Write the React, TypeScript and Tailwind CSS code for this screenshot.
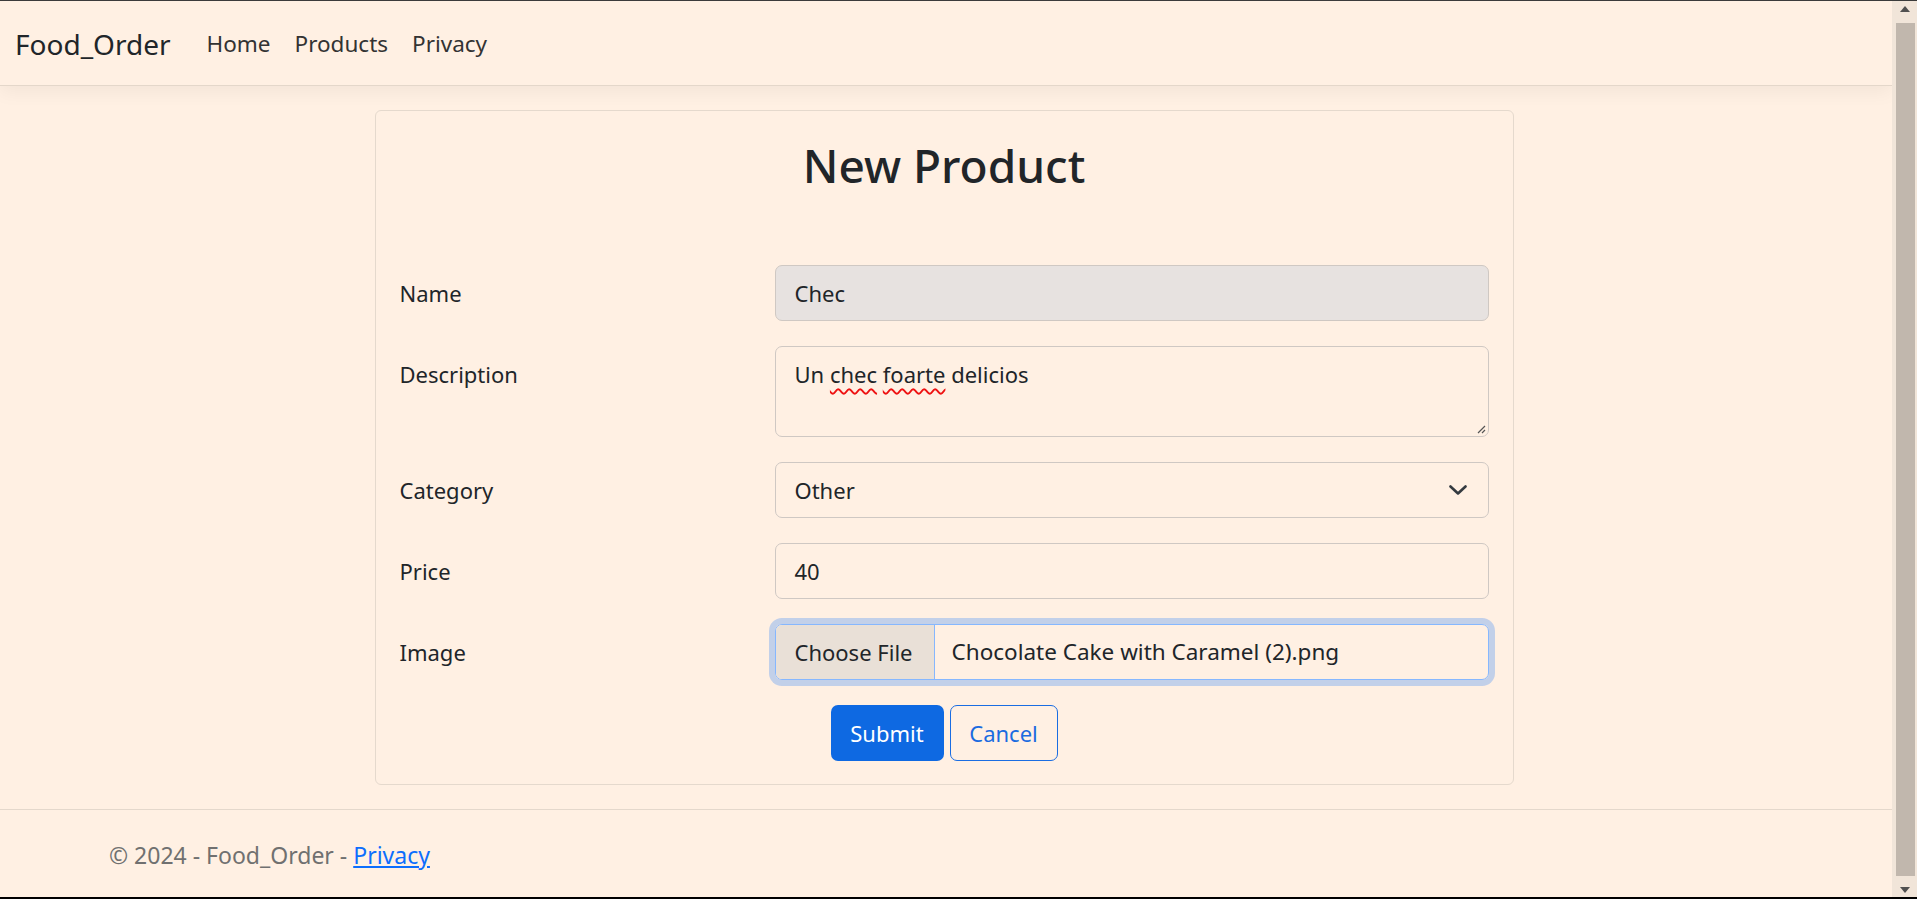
import { ReactNode } from "react";

function Row({ label, children }: { label: string; children: ReactNode }) {
  return (
    <div className="grid grid-cols-[375px_714px]">
      <label className="pt-[10px] leading-[36px]">{label}</label>
      {children}
    </div>
  );
}

function Scrollbar() {
  return (
    <div className="flex w-[25px] shrink-0 flex-col items-center bg-[#f1e5d9] pl-[1px]">
      <svg width="10" height="6" viewBox="0 0 10 6" className="mt-[5px]">
        <path d="M0 6 L5 0 L10 6 Z" fill="#505050" />
      </svg>
      <div className="mt-[11px] mb-[11px] w-[19px] flex-1 bg-[#c1b7ad]" />
      <svg width="10" height="6" viewBox="0 0 10 6" className="mb-[4px]">
        <path d="M0 0 L10 0 L5 6 Z" fill="#505050" />
      </svg>
    </div>
  );
}

export default function App() {
  return (
    <div className="flex h-[899px] w-full overflow-hidden border-t border-b-2 border-t-[#3b3b3b] border-b-black bg-[#fff0e3] font-['Noto_Sans',sans-serif] text-[22px] text-[#212529]">
      <div className="flex min-w-0 flex-1 flex-col">
        {/* navbar */}
        <nav className="flex h-[85px] shrink-0 items-center border-b border-[#e4d7ca] px-[15px] pt-[2px] shadow-[0_6px_18px_rgba(0,0,0,0.05)]">
          <a href="#" className="mr-[24px] text-[28px] leading-none">Food_Order</a>
          <a href="#" className="px-[12px] text-[22.5px] text-[#333]">Home</a>
          <a href="#" className="px-[12px] text-[22.5px] text-[#333]">Products</a>
          <a href="#" className="px-[12px] text-[22.5px] text-[#333]">Privacy</a>
        </nav>

        <main className="flex-1 py-[24px] pr-[4px]">
          <div className="mx-auto w-[1139px] rounded-[6px] border border-[#e5d9cd] px-[24px] pt-[27px] pb-[23px]">
            <h2 className="mb-[72px] text-center text-[46px] font-medium leading-[55px]">New Product</h2>

            <div className="flex flex-col gap-[25px]">
              <Row label="Name">
                <div className="flex h-[56px] items-center rounded-[7px] border border-[#cfc8c3] bg-[#e7e2e0] px-[19px]">Chec</div>
              </Row>

              <Row label="Description">
                <div className="relative h-[91px] rounded-[7px] border border-[#cfc8c3] px-[19px] pt-[9px] leading-[36px]">
                  Un{" "}
                  <span className="underline decoration-[#e11] decoration-wavy decoration-[1.5px] underline-offset-[5px]">chec</span>{" "}
                  <span className="underline decoration-[#e11] decoration-wavy decoration-[1.5px] underline-offset-[5px]">foarte</span>{" "}
                  delicios
                  <svg width="10" height="10" viewBox="0 0 10 10" className="absolute right-[2px] bottom-[2px]">
                    <path d="M9 2 L2 9 M9 6 L6 9" stroke="#555" strokeWidth="1.2" />
                  </svg>
                </div>
              </Row>

              <Row label="Category">
                <div className="flex h-[56px] items-center justify-between rounded-[7px] border border-[#cfc8c3] pr-[21px] pl-[19px]">
                  <span>Other</span>
                  <svg width="18" height="10" viewBox="0 0 18 10" fill="none">
                    <path d="M1.5 1.5 L9 8.5 L16.5 1.5" stroke="#343a40" strokeWidth="2.6" strokeLinecap="round" strokeLinejoin="round" />
                  </svg>
                </div>
              </Row>

              <Row label="Price">
                <div className="flex h-[56px] items-center rounded-[7px] border border-[#cfc8c3] px-[19px]">40</div>
              </Row>

              <Row label="Image">
                <div className="flex h-[56px] items-stretch overflow-hidden rounded-[7px] border border-[#86b7fe] shadow-[0_0_0_6px_rgba(13,110,253,0.25)]">
                  <div className="flex w-[159px] items-center border-r border-[#86b7fe] bg-[#e9e0d7] pl-[19px]">Choose File</div>
                  <div className="flex items-center pl-[17px] text-[22.5px]">Chocolate Cake with Caramel (2).png</div>
                </div>
              </Row>

              <div className="flex justify-center gap-[6px]">
                <button className="h-[56px] w-[113px] rounded-[7px] bg-[#0e69e2] text-white">Submit</button>
                <button className="h-[56px] w-[108px] rounded-[7px] border border-[#1a6de2] text-[#1a6be0]">Cancel</button>
              </div>
            </div>
          </div>
        </main>

        {/* footer */}
        <footer className="flex h-[88px] shrink-0 items-center border-t border-[#e4d8cc] pt-[3px] pl-[109px] text-[23px] text-[#707070]">
          <span>
            © 2024 - Food_Order -{" "}
            <a href="#" className="text-[#0d6efd] underline">Privacy</a>
          </span>
        </footer>
      </div>
      <Scrollbar />
    </div>
  );
}
